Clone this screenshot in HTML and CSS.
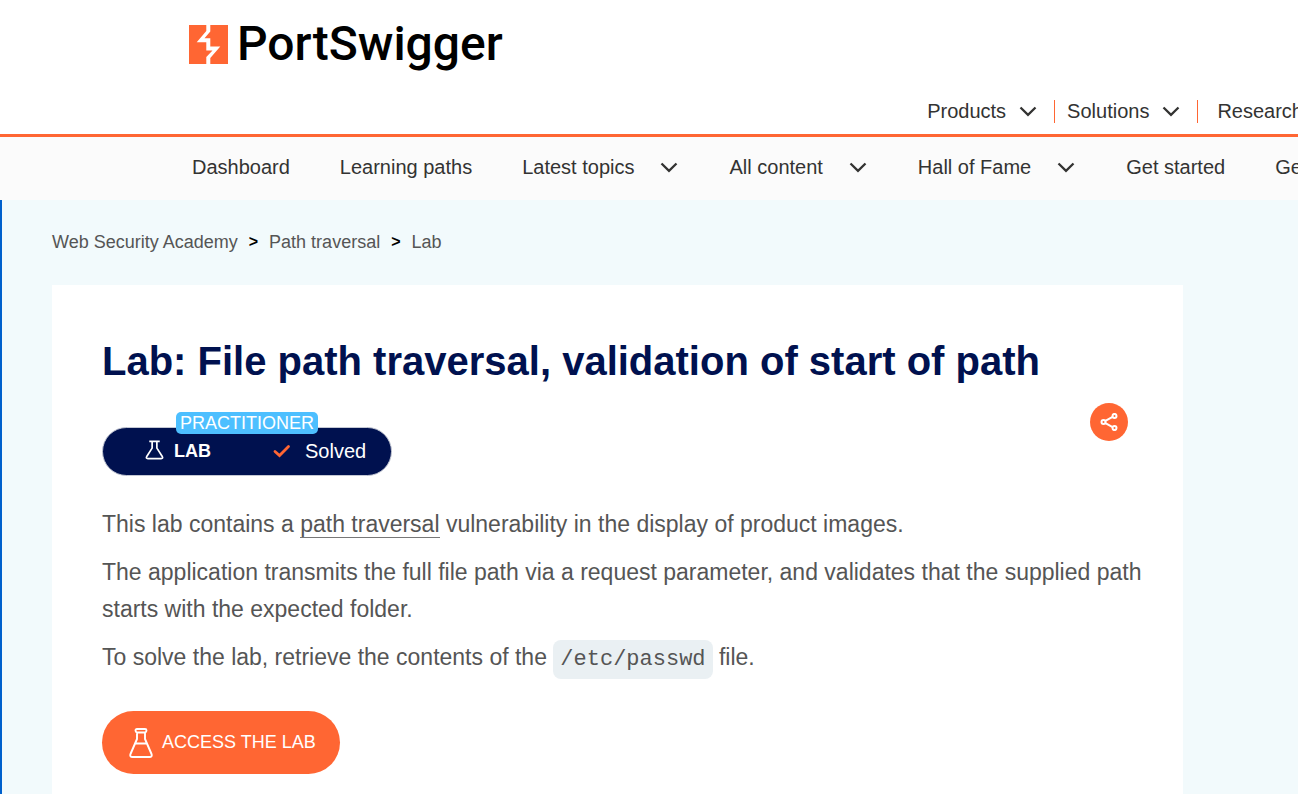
FILE: index.html
```html
<!DOCTYPE html>
<html lang="en">
<head>
<meta charset="utf-8">
<title>Lab: File path traversal, validation of start of path</title>
<link rel="stylesheet" href="styles.css">
</head>
<body>
<svg class="sprite" aria-hidden="true">
  <symbol id="chevron" viewBox="0 0 18 12"><path d="M1.500 1.500 9 8.800 16.500 1.500" fill="none" stroke="currentColor" stroke-width="2.300"/></symbol>
</svg>
<header class="site-header">
  <a class="logo" href="#">
    <svg class="logo-mark" viewBox="0 0 39 39" aria-hidden="true">
      <path fill="#ff6633" d="M0 0h39v39H0z"/>
      <path fill="#fff" d="M17.300 0H21.300V6.500L15.500 13.300H21.300V21.500H31.300L21.300 33V39H17.300V32L23.500 25.500H17.300V17.300H7.700L17.300 6z"/>
    </svg>
    <span class="logo-name">PortSwigger</span>
  </a>
  <nav class="main-nav" aria-label="Main">
    <button class="nav-item main-item">Products <svg class="chevron"><use href="#chevron"/></svg></button>
    <button class="nav-item main-item">Solutions <svg class="chevron"><use href="#chevron"/></svg></button>
    <a class="nav-item research" href="#">Research</a>
  </nav>
</header>
<nav class="sub-nav" aria-label="Academy">
  <a class="nav-item" href="#">Dashboard</a>
  <a class="nav-item" href="#">Learning paths</a>
  <button class="nav-item sub-menu">Latest topics <svg class="chevron"><use href="#chevron"/></svg></button>
  <button class="nav-item sub-menu">All content <svg class="chevron"><use href="#chevron"/></svg></button>
  <button class="nav-item sub-menu">Hall of Fame <svg class="chevron"><use href="#chevron"/></svg></button>
  <a class="nav-item" href="#">Get started</a>
  <a class="nav-item" href="#">Get certified</a>
</nav>
<main class="page">
  <nav class="breadcrumbs" aria-label="Breadcrumb">
    <a href="#">Web Security Academy</a>
    <span class="crumb-sep">&gt;</span>
    <a href="#">Path traversal</a>
    <span class="crumb-sep">&gt;</span>
    <a href="#">Lab</a>
  </nav>
  <article class="card">
    <h1 class="title">Lab: File path traversal, validation of start of path</h1>
    <div class="meta">
      <div class="status">
        <span class="level">PRACTITIONER</span>
        <svg class="status-flask" viewBox="0 0 20 20" aria-hidden="true"><path d="M4.500 1h11M7.500 1v7L2 16.500Q.5 19 3 19h14q2.500 0 1-2.500L12.500 8V1" fill="none" stroke="#fff" stroke-width="1.800"/></svg>
        <span class="kind">LAB</span>
        <svg class="check" viewBox="0 0 18 14" aria-hidden="true"><path d="M2 7.500 6.500 11.500 15.500 2.500" fill="none" stroke="#ff6633" stroke-width="2.800" stroke-linecap="round"/></svg>
        <span class="solved">Solved</span>
      </div>
      <button class="share" aria-label="Share">
        <svg viewBox="0 0 18 18" aria-hidden="true"><g fill="none" stroke="#fff" stroke-width="2"><circle cx="3.500" cy="9" r="2"/><circle cx="14.500" cy="2.900" r="2"/><circle cx="14.500" cy="15.100" r="2"/><path d="m5.400 7.900 7.200-4M5.400 10.100l7.200 4"/></g></svg>
      </button>
    </div>
    <p>This lab contains a <a class="term" href="#">path traversal</a> vulnerability in the display of product images.</p>
    <p>The application transmits the full file path via a request parameter, and validates that the supplied path starts with the expected folder.</p>
    <p>To solve the lab, retrieve the contents of the <code>/etc/passwd</code> file.</p>
    <a class="access" href="#">
      <svg class="access-flask" viewBox="0 0 24 30" aria-hidden="true"><path d="M8 1h8q1.500 0 1.500 1.500T16 4.500V11L22.500 26q1 3-2 3h-17q-3 0-2-3L8 11V4.500Q6.500 4 6.500 2.500T8 1zM8 4.500h8M6.300 15.500h11.400" fill="none" stroke="#fff" stroke-width="1.900" stroke-linejoin="round"/></svg>
      ACCESS THE LAB
    </a>
  </article>
</main>
</body>
</html>
```
FILE: styles.css
```css
* {
  box-sizing: border-box;
}

body {
  margin: 0;
  min-height: 100vh;
  display: flex;
  flex-direction: column;
  overflow-x: hidden;
  background: #fff;
  color: #555;
  font-family: "Liberation Sans", Arial, sans-serif;
}

a {
  color: inherit;
  text-decoration: none;
}

.sprite {
  display: none;
}

.site-header {
  display: flex;
  flex-direction: column;
  justify-content: space-between;
  height: 137px;
  padding: 15px 0 11px;
  border-bottom: 3px solid #ff6633;
}

.logo {
  display: flex;
  align-items: center;
  align-self: flex-start;
  gap: 9px;
  margin-left: 189px;
  color: #000;
}

.logo-mark {
  width: 39px;
  height: 39px;
}

.logo-name {
  font: 500 48px/58px Roboto, sans-serif;
}

.nav-item {
  flex: none;
  display: flex;
  align-items: center;
  padding: 0;
  border: 0;
  background: none;
  color: #333332;
  font: 20px/23px "Liberation Sans", Arial, sans-serif;
  white-space: nowrap;
}

.chevron {
  width: 18px;
  height: 12px;
}

.main-nav {
  display: flex;
  justify-content: flex-end;
  margin-right: -5px;
}

.main-item {
  gap: 13px;
  padding: 0 17px 0 12px;
  border-right: 1px solid #ff6633;
}

.research {
  padding-left: 19px;
}

.sub-nav {
  display: flex;
  align-items: center;
  gap: 50px;
  height: 63px;
  padding: 0 0 2px 192px;
  background: #fbfbfb;
  overflow: hidden;
}

.sub-menu {
  gap: 26px;
  margin-right: 1px;
}

.page {
  flex: 1;
  display: flex;
  flex-direction: column;
  padding: 30px 115px 0 50px;
  border-left: 2px solid #0060cc;
  background: #f2fafc;
}

.breadcrumbs {
  display: flex;
  align-items: center;
  gap: 11px;
  font-size: 18px;
  line-height: 24px;
}

.crumb-sep {
  color: #000;
  font-size: 16px;
  font-weight: bold;
}

.card {
  flex: 1;
  margin-top: 31px;
  padding: 50px 40px 20px 50px;
  background: #fff;
}

.title {
  margin: 0;
  color: #00114f;
  font-size: 40px;
  line-height: 52px;
}

.meta {
  display: flex;
  justify-content: space-between;
  align-items: flex-start;
  margin: 16px 15px 30px 0;
}

.status {
  position: relative;
  display: flex;
  align-items: center;
  width: 290px;
  height: 49px;
  margin-top: 24px;
  padding: 0 0 1px 42px;
  border: 1px solid #c4c8d4;
  border-radius: 25px;
  background: #00114f;
  color: #fff;
}

.level {
  position: absolute;
  top: -16px;
  left: 73px;
  padding: 0 4px;
  border-radius: 5px;
  background: #4dbfff;
  font-size: 18px;
  line-height: 22px;
}

.status-flask {
  width: 19px;
  height: 20px;
  margin-bottom: 2px;
}

.kind {
  margin-left: 10px;
  font-size: 18px;
  font-weight: bold;
}

.check {
  width: 18px;
  height: 14px;
  margin-left: 62px;
}

.solved {
  margin-left: 14px;
  font-size: 20px;
}

.share {
  display: flex;
  align-items: center;
  justify-content: center;
  width: 38px;
  height: 38px;
  padding: 0;
  border: 0;
  border-radius: 50%;
  background: #ff6633;
}

.share svg {
  width: 18px;
  height: 18px;
}

p {
  margin: 0 0 11px;
  font-size: 23px;
  line-height: 37px;
}

.term {
  border-bottom: 1px solid #777;
}

code {
  padding: 7px;
  border-radius: 8px;
  background: #eaf0f3;
  font: 22px/24px "Liberation Mono", monospace;
}

.access {
  display: inline-flex;
  align-items: center;
  gap: 9px;
  height: 63px;
  margin-top: 24px;
  padding: 0 24px 0 27px;
  border-radius: 32px;
  background: #ff6633;
  color: #fff;
  font-size: 18px;
}

.access-flask {
  width: 24px;
  height: 30px;
}
```
